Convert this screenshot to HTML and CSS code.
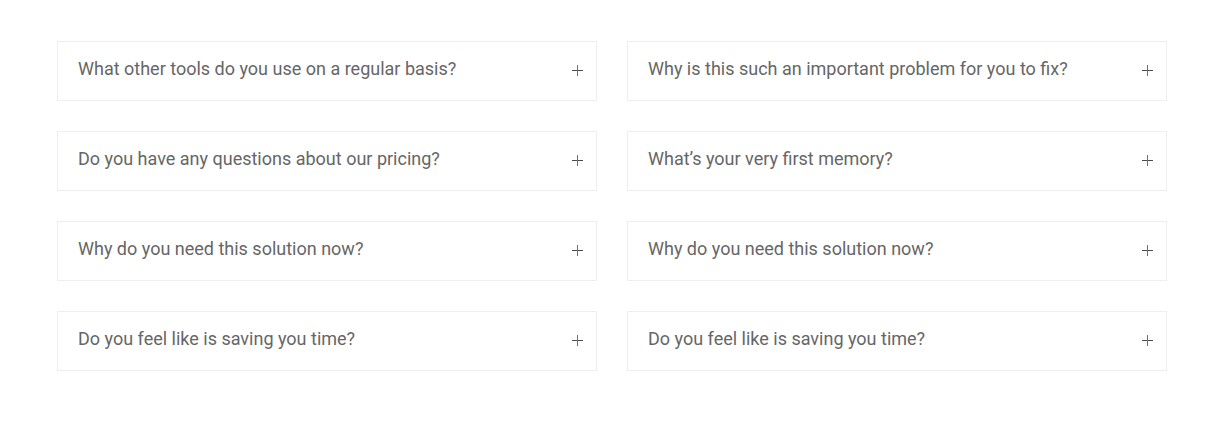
FILE: index.html
```html
<!DOCTYPE html>
<html>
<head>
<meta charset="utf-8">
<link rel="stylesheet" href="styles.css">
</head>
<body>
<div class="faq">
  <div class="item"><span class="q">What other tools do you use on a regular basis?</span><span class="plus"></span></div>
  <div class="item"><span class="q">Why is this such an important problem for you to fix?</span><span class="plus"></span></div>
  <div class="item"><span class="q">Do you have any questions about our pricing?</span><span class="plus"></span></div>
  <div class="item"><span class="q">What’s your very first memory?</span><span class="plus"></span></div>
  <div class="item"><span class="q">Why do you need this solution now?</span><span class="plus"></span></div>
  <div class="item"><span class="q">Why do you need this solution now?</span><span class="plus"></span></div>
  <div class="item"><span class="q">Do you feel like is saving you time?</span><span class="plus"></span></div>
  <div class="item"><span class="q">Do you feel like is saving you time?</span><span class="plus"></span></div>
</div>
</body>
</html>
```

FILE: styles.css
```css
html, body { margin: 0; padding: 0; background: #fff; }
body { font-family: Roboto, "Liberation Sans", sans-serif; }
.faq {
  display: grid;
  grid-template-columns: 540px 540px;
  column-gap: 30px;
  row-gap: 30px;
  padding: 41px 0 0 57px;
}
.item {
  box-sizing: border-box;
  height: 60px;
  border: 1px solid #eeeeee;
  display: flex;
  align-items: center;
  justify-content: space-between;
  padding: 0 13px 0 20px;
}
.q {
  font-size: 18px;
  color: #666666;
  line-height: 1;
  margin-top: -4px;
}
.plus {
  position: relative;
  width: 11px;
  height: 11px;
  margin-top: -2px;
}
.plus::before, .plus::after {
  content: "";
  position: absolute;
  background: #4a4a4a;
}
.plus::before { left: 0; right: 0; top: 5px; height: 1px; }
.plus::after { top: 0; bottom: 0; left: 5px; width: 1px; background: #8a6a40; }
```
